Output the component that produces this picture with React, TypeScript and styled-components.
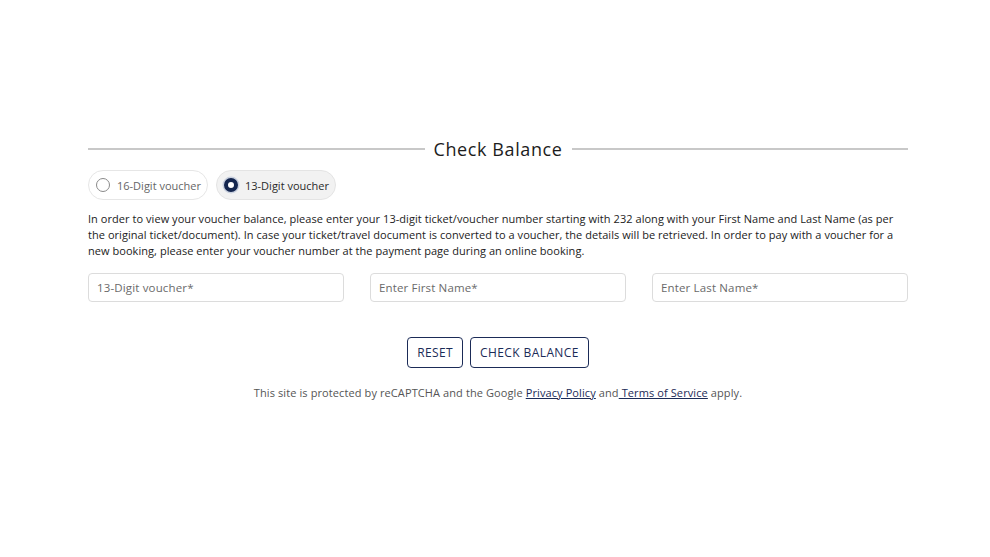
import React, { useState } from "react";
import styled, { createGlobalStyle } from "styled-components";

const GlobalStyle = createGlobalStyle`
  html, body {
    margin: 0;
    padding: 0;
    background: #ffffff;
  }
  body {
    font-family: "Open Sans", "Liberation Sans", sans-serif;
    color: #222222;
  }
`;

type VoucherKind = "16" | "13";

export default function App() {
  const [kind, setKind] = useState<VoucherKind>("13");

  return (
    <>
      <GlobalStyle />
      <Page>
        <Card>
          <TitleRow>
            <Rule />
            <Title>Check Balance</Title>
            <Rule />
          </TitleRow>

          <RadioGroup>
            <Pill $active={kind === "16"} onClick={() => setKind("16")}>
              <RadioDot $checked={kind === "16"} />
              16-Digit voucher
            </Pill>
            <Pill $active={kind === "13"} onClick={() => setKind("13")}>
              <RadioDot $checked={kind === "13"} />
              13-Digit voucher
            </Pill>
          </RadioGroup>

          <Intro>
            In order to view your voucher balance, please enter your 13-digit
            ticket/voucher number starting with 232 along with your First Name
            and Last Name (as per the original ticket/document). In case your
            ticket/travel document is converted to a voucher, the details will
            be retrieved. In order to pay with a voucher for a new booking,
            please enter your voucher number at the payment page during an
            online booking.
          </Intro>

          <Fields>
            <Field placeholder={`${kind}-Digit voucher*`} />
            <Field placeholder="Enter First Name*" />
            <Field placeholder="Enter Last Name*" />
          </Fields>

          <Actions>
            <OutlineButton>RESET</OutlineButton>
            <OutlineButton>CHECK BALANCE</OutlineButton>
          </Actions>

          <Legal>
            This site is protected by reCAPTCHA and the Google{" "}
            <LegalLink href="#">Privacy Policy</LegalLink> and
            <LegalLink href="#"> Terms of Service</LegalLink> apply.
          </Legal>
        </Card>
      </Page>
    </>
  );
}

const Page = styled.div`
  display: flex;
  justify-content: center;
  padding: 137px 0 0 6px;
  min-height: 557px;
  box-sizing: border-box;
`;

const Card = styled.div`
  width: 820px;
  display: flex;
  flex-direction: column;
`;

const TitleRow = styled.div`
  display: flex;
  align-items: center;
  gap: 9px;
`;

const Rule = styled.div`
  flex: 1;
  height: 2px;
  background: #c8c8c8;
`;

const Title = styled.h2`
  margin: 0;
  font-size: 18px;
  font-weight: 400;
  letter-spacing: 0.6px;
  color: #1c1c1c;
  line-height: 24px;
`;

const RadioGroup = styled.div`
  display: flex;
  gap: 8px;
  margin-top: 9px;
`;

const Pill = styled.label<{ $active: boolean }>`
  display: flex;
  align-items: center;
  gap: 7px;
  width: 120px;
  height: 30px;
  box-sizing: border-box;
  padding: 0 0 0 7px;
  border-radius: 15px;
  border: 1px solid ${(p) => (p.$active ? "#e4e4e4" : "#e6e6e6")};
  background: ${(p) => (p.$active ? "#f2f2f2" : "#ffffff")};
  font-size: 11px;
  white-space: nowrap;
  color: ${(p) => (p.$active ? "#2a2a2a" : "#666666")};
  cursor: pointer;
`;

const RadioDot = styled.span<{ $checked: boolean }>`
  width: 14px;
  height: 14px;
  border-radius: 50%;
  box-sizing: border-box;
  flex-shrink: 0;
  border: ${(p) => (p.$checked ? "4px solid #14264f" : "1px solid #8a8a8a")};
  background: #ffffff;
  box-shadow: ${(p) => (p.$checked ? "0 0 0 1.5px #c9d0de" : "none")};
`;

const Intro = styled.p`
  margin: 11px 0 0;
  font-size: 11px;
  line-height: 16px;
  letter-spacing: 0.05px;
  color: #222222;
`;

const Fields = styled.div`
  display: grid;
  grid-template-columns: repeat(3, 1fr);
  gap: 26px;
  margin-top: 14px;
`;

const Field = styled.input`
  height: 29px;
  box-sizing: border-box;
  border: 1px solid #dcdcdc;
  border-radius: 4px;
  padding: 0 8px;
  font-family: inherit;
  font-size: 11.5px;
  letter-spacing: 0.15px;
  color: #222222;
  outline: none;
  &::placeholder {
    color: #6a6a6a;
  }
`;

const Actions = styled.div`
  display: flex;
  justify-content: center;
  gap: 7px;
  margin-top: 35px;
`;

const OutlineButton = styled.button`
  height: 31px;
  padding: 0 9px;
  background: #ffffff;
  border: 1px solid #1b2b57;
  border-radius: 4px;
  color: #1b2b57;
  font-family: inherit;
  font-size: 12px;
  letter-spacing: 0.4px;
  cursor: pointer;
`;

const Legal = styled.p`
  margin: 17px 0 0;
  text-align: center;
  font-size: 11px;
  letter-spacing: 0.1px;
  color: #555555;
`;

const LegalLink = styled.a`
  color: #1b2b57;
  text-decoration: underline;
`;
